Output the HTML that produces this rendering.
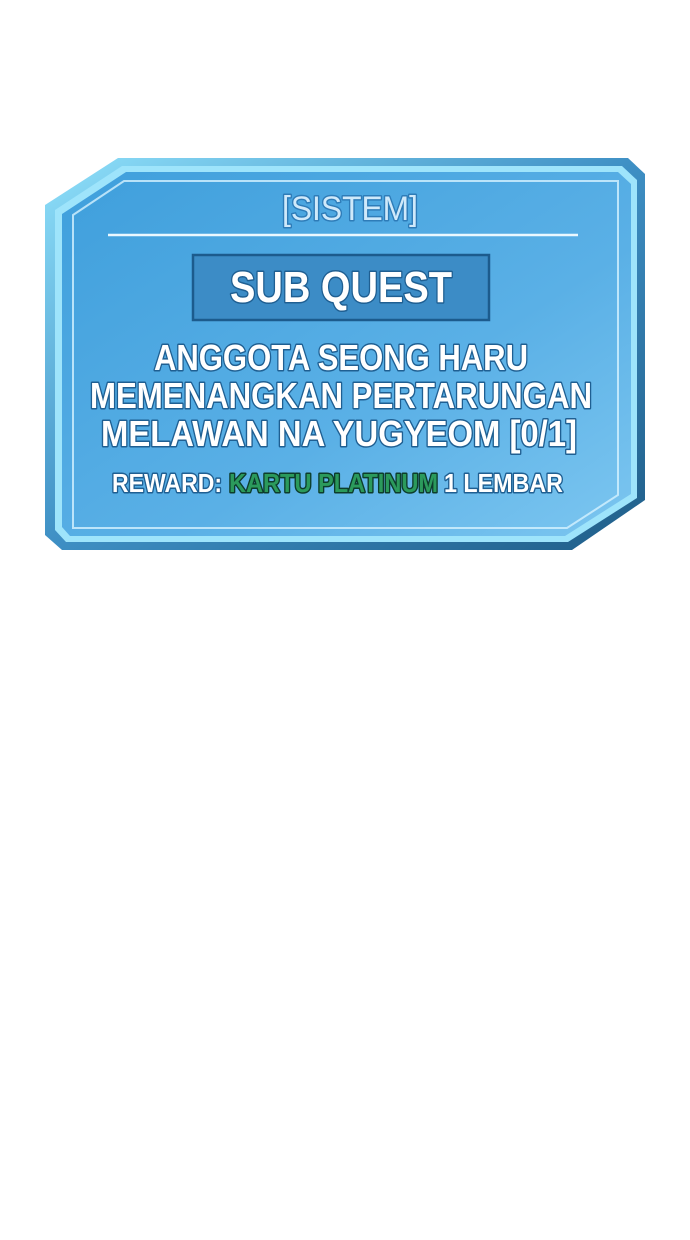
<!DOCTYPE html>
<html><head><meta charset="utf-8"><style>
html,body{margin:0;padding:0;background:#fff;width:690px;height:1240px;overflow:hidden}
text{font-family:"Liberation Sans Narrow","Liberation Sans",sans-serif;font-weight:bold;paint-order:stroke;stroke-linejoin:round}
</style></head><body>
<svg width="690" height="1240" viewBox="0 0 690 1240" xmlns="http://www.w3.org/2000/svg">
<defs>
<linearGradient id="g" x1="0" y1="0" x2="1" y2="1">
<stop offset="0" stop-color="#3f9fdc"/><stop offset="0.6" stop-color="#5ab0e6"/><stop offset="1" stop-color="#7cc6f0"/>
</linearGradient>
<linearGradient id="o" x1="0" y1="0" x2="1" y2="1">
<stop offset="0" stop-color="#8fe0fa"/><stop offset="0.5" stop-color="#3e8fc4"/><stop offset="1" stop-color="#1f5d88"/>
</linearGradient>
</defs>
<polygon points="45,205 118,158 628,158 645,174 645,500 572,550 62,550 45,535" fill="url(#o)"/>
<polygon points="55,210 122,166 622,166 637,180 637,498 568,542 66,542 55,530" fill="#9ee4fb"/>
<polygon points="62,214 126,172 618,172 631,184 631,494 565,536 70,536 62,527" fill="url(#g)"/>
<polygon points="73,215 124,181 618,181 618,495 567,528 73,528" fill="none" stroke="#d6f3ff" stroke-width="2" opacity="0.8"/>
<line x1="108" y1="235" x2="578" y2="235" stroke="#eaf8ff" stroke-width="2.5"/>
<text x="350" y="220" font-size="34" text-anchor="middle" fill="#cfe9fa" stroke="#2e7cb8" stroke-width="3" style="font-weight:normal" textLength="136" lengthAdjust="spacingAndGlyphs">[SISTEM]</text>
<rect x="193" y="255" width="296" height="65" fill="#3c8cc6" stroke="#1c5b8d" stroke-width="2.5"/>
<text x="341" y="302" font-size="44" text-anchor="middle" fill="#fff" stroke="#1f5f92" stroke-width="3" textLength="222" lengthAdjust="spacingAndGlyphs">SUB QUEST</text>
<g font-size="36" fill="#fff" stroke="#1f5f92" stroke-width="3" text-anchor="middle">
<text x="341" y="370" textLength="374" lengthAdjust="spacingAndGlyphs">ANGGOTA SEONG HARU</text>
<text x="341" y="408" textLength="502" lengthAdjust="spacingAndGlyphs">MEMENANGKAN PERTARUNGAN</text>
<text x="339" y="446" textLength="476" lengthAdjust="spacingAndGlyphs">MELAWAN NA YUGYEOM  [0/1]</text>
</g>
<text x="112" y="492" font-size="26" fill="#fff" stroke="#1f5f92" stroke-width="3" textLength="110" lengthAdjust="spacingAndGlyphs">REWARD:</text>
<text x="229" y="492" font-size="26" fill="#2b9a5c" stroke="#0d3d2c" stroke-width="3" textLength="209" lengthAdjust="spacingAndGlyphs">KARTU PLATINUM</text>
<text x="444" y="492" font-size="26" fill="#fff" stroke="#1f5f92" stroke-width="3" textLength="119" lengthAdjust="spacingAndGlyphs">1 LEMBAR</text>
</svg>
</body></html>
